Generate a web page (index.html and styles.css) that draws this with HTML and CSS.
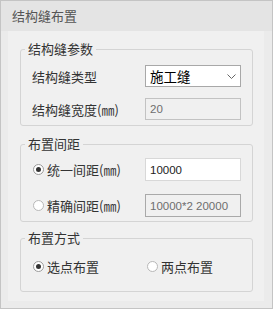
FILE: index.html
```html
<!DOCTYPE html>
<html lang="zh-CN">
	<head>
		<meta charset="UTF-8" />
		<title>结构缝布置</title>
		<link rel="stylesheet" href="styles.css">
	</head>
	<body>
		<div class="dialog">
			<div class="title">结构缝布置</div>
			<div class="body">
				<div class="panel">
					<fieldset class="group group-params">
						<legend>结构缝参数</legend>
						<div class="content">
							<div class="row">
								<span class="label">结构缝类型</span>
								<div class="select">
									<span>施工缝</span>
									<svg width="9" height="5" viewBox="0 0 9 5"><path d="M0.5 0.5 L4.5 4.5 L8.5 0.5" fill="none" stroke="#666" stroke-width="1"/></svg>
								</div>
							</div>
							<div class="row">
								<span class="label">结构缝宽度(㎜)</span>
								<div class="field disabled">20</div>
							</div>
						</div>
					</fieldset>

					<fieldset class="group group-spacing">
						<legend>布置间距</legend>
						<div class="content">
							<div class="row">
								<label class="radio checked"><span class="dot"></span>统一间距(㎜)</label>
								<div class="field">10000</div>
							</div>
							<div class="row">
								<label class="radio"><span class="dot"></span>精确间距(㎜)</label>
								<div class="field disabled dark">10000*2 20000</div>
							</div>
						</div>
					</fieldset>

					<fieldset class="group group-mode">
						<legend>布置方式</legend>
						<div class="content">
							<div class="choices">
								<label class="radio checked"><span class="dot"></span>选点布置</label>
								<label class="radio"><span class="dot"></span>两点布置</label>
							</div>
						</div>
					</fieldset>
				</div>
			</div>
		</div>
	</body>
</html>
```

FILE: styles.css
```css
body {
	margin: 0;
	font-family: "Noto Sans CJK SC", "Microsoft YaHei", sans-serif;
	font-size: 13px;
	color: #333;
}
.dialog {
	box-sizing: border-box;
	width: 273px;
	height: 309px;
	border: 1px solid #c4c4c4;
	display: flex;
	flex-direction: column;
	background: #ebebeb;
}
.title {
	height: 30px;
	line-height: 30px;
	padding-left: 11px;
	background: #e4e4e4;
	color: #555;
}
.body {
	flex: 1;
	display: flex;
	padding: 0 8px 7px 7px;
}
.panel {
	flex: 1;
	background: #f0f0f0;
	padding: 10px 11px 0 12px;
}
.group {
	margin: 0;
	padding: 0;
	min-inline-size: 0;
	border: 1px solid #d4d4d4;
	border-radius: 3px;
}
.group legend {
	margin-left: 4px;
	padding: 0 3px;
	line-height: 16px;
	color: #333;
}
.group-spacing {
	margin-top: 10px;
}
.group-mode {
	margin-top: 8px;
}
.content {
	display: flex;
	flex-direction: column;
}
.group-params .content {
	padding: 8px 11px 5px 11px;
	gap: 11px;
}
.group-spacing .content {
	padding: 6px 11px 4px 12px;
	gap: 13px;
}
.group-mode .content {
	padding: 9px 11px 14px 12px;
}
.row {
	display: flex;
	align-items: center;
	justify-content: space-between;
	height: 22px;
}
.group-spacing .row {
	height: 23px;
}
.select,
.field {
	box-sizing: border-box;
	width: 96px;
	height: 100%;
	border: 1px solid #a8a8a8;
	background: #fff;
	display: flex;
	align-items: center;
}
.select {
	justify-content: space-between;
	padding: 0 4px 0 4px;
	color: #000;
	font-size: 13.5px;
}
.field {
	padding-left: 4px;
	font-family: "Liberation Sans", Arial, sans-serif;
	font-size: 11.5px;
	color: #222;
	border-color: #d8d8d8;
}
.field.disabled {
	background: #f0f0f0;
	color: #6e6e6e;
	border-color: #c2c2c2;
}
.field.dark {
	border-color: #a9a9a9;
}
.radio {
	display: flex;
	align-items: center;
	gap: 3px;
	height: 22px;
}
.dot {
	box-sizing: border-box;
	width: 11px;
	height: 11px;
	border-radius: 50%;
	border: 1px solid #b8b8b8;
	background: #fff;
	display: flex;
	align-items: center;
	justify-content: center;
}
.radio.checked .dot {
	border-color: #9a9a9a;
}
.radio.checked .dot::after {
	content: "";
	width: 5px;
	height: 5px;
	border-radius: 50%;
	background: #333;
}
.choices {
	display: grid;
	grid-template-columns: 114px auto;
}
```
